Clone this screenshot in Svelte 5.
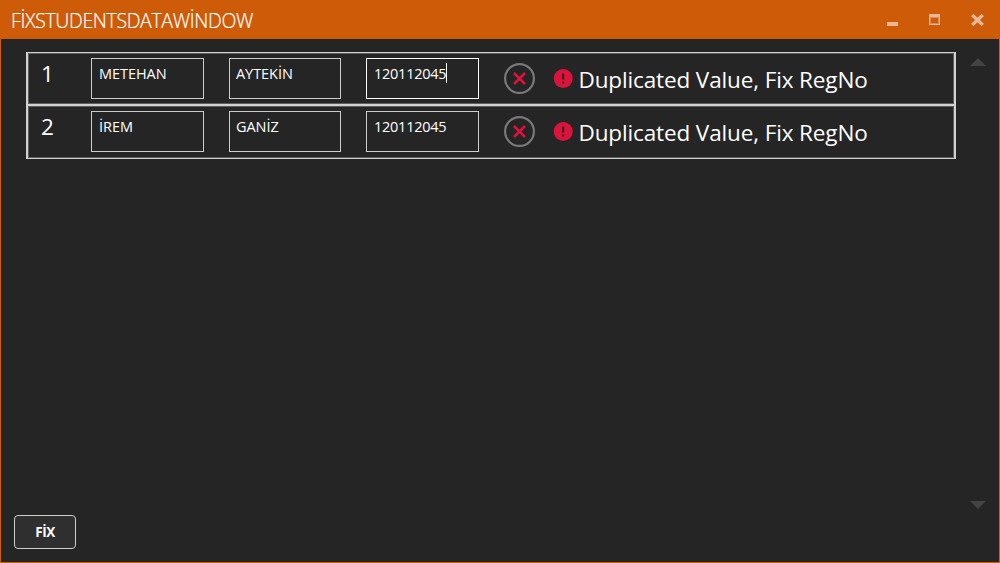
<script>
  const students = [
    { no: 1, name: 'METEHAN', surname: 'AYTEKİN', reg: '120112045', focused: true },
    { no: 2, name: 'İREM', surname: 'GANİZ', reg: '120112045', focused: false }
  ];
</script>

<div class="window">
  <header>
    <h1>FİXSTUDENTSDATAWİNDOW</h1>
    <svg class="controls" width="110" height="38" viewBox="0 0 110 38" shape-rendering="crispEdges">
      <path d="M7 22h11v4H7z" fill="#ebb99a" />
      <path fill="#ebb99a" fill-rule="evenodd" d="M49 14h11v11H49zM51 18v5h7v-5z" />
      <path d="M50.5 17.5h8v6h-8z" fill="none" stroke="#dd8a55" />
      <path d="M92.2 15l10.6 10M102.8 15l-10.6 10" stroke="#ebb99a" stroke-width="3.2" fill="none" shape-rendering="auto" />
    </svg>
  </header>

  <main>
    <div class="list">
      {#each students as s}
        <div class="row">
          <span class="no">{s.no}</span>
          <div class="field name"><span>{s.name}</span></div>
          <div class="field surname"><span>{s.surname}</span></div>
          <div class="field reg" class:focused={s.focused}>
            <span>{s.reg}</span>{#if s.focused}<i class="caret"></i>{/if}
          </div>
          <svg class="remove" width="32" height="32" viewBox="0 0 32 32">
            <circle cx="15.5" cy="15.5" r="14.4" fill="none" stroke="#797979" stroke-width="2.2" />
            <path d="M10 10l11 11M21 10L10 21" stroke="#dc143c" stroke-width="2.5" fill="none" />
          </svg>
          <svg class="alert" width="20" height="20" viewBox="0 0 20 20">
            <circle cx="10.2" cy="9.5" r="9.5" fill="#dc143c" />
            <path d="M9.2 4.6h2v6h-2zM9.2 12.4h2v2h-2z" fill="#252525" />
          </svg>
          <span class="message">Duplicated Value, Fix RegNo</span>
        </div>
      {/each}
    </div>
    <div class="scroll">
      <svg width="16" height="8" viewBox="0 0 16 8"><path d="M0 8L8 0l8 8z" fill="#434343" /></svg>
      <svg width="16" height="8" viewBox="0 0 16 8"><path d="M0 0h16L8 8z" fill="#434343" /></svg>
    </div>
  </main>

  <footer><button>FİX</button></footer>
</div>

<style>
  :global(body) { margin: 0; background: #252525; }
  .window {
    box-sizing: border-box;
    width: 1000px;
    height: 563px;
    display: flex;
    flex-direction: column;
    border: 1px solid #ce5b08;
    background: #252525;
    color: #fff;
    font-family: "Open Sans", "Noto Sans", sans-serif;
  }
  header {
    height: 38px;
    flex: none;
    display: flex;
    justify-content: space-between;
    padding-left: 10px;
    background: #ce5b08;
  }
  h1 {
    margin: 0;
    font-size: 19.5px;
    font-weight: 300;
    line-height: 40px;
    letter-spacing: -0.35px;
    white-space: nowrap;
    -webkit-text-stroke: 0.2px #fff;
  }
  .controls { margin: -1px 9px 0 0; }
  main {
    flex: 1;
    display: flex;
    align-items: flex-start;
    padding: 13px 13px 0 25px;
  }
  .list { width: 930px; flex: none; }
  .row {
    box-sizing: border-box;
    height: 53px;
    display: flex;
    align-items: flex-start;
    border: solid #d2d2d2;
    border-width: 1px 2px;
    box-shadow: inset 0 0 0 1px #5e5e5e;
  }
  .row + .row { height: 54px; }
  .no {
    width: 50px;
    padding-left: 13px;
    margin-top: 6px;
    font-size: 22.5px;
    line-height: 30px;
  }
  .field {
    box-sizing: border-box;
    width: 113px;
    height: 41px;
    margin-top: 5px;
    padding: 6px 0 0 7px;
    display: flex;
    align-items: flex-start;
    border: 1px solid #ccc;
    font-size: 14.5px;
    line-height: 18px;
    letter-spacing: -0.05px;
    white-space: nowrap;
  }
  .surname { width: 112px; margin-left: 25px; padding-left: 6px; }
  .reg { margin-left: 25px; letter-spacing: -0.25px; }
  .focused { border-color: #fff; }
  .caret { width: 1px; height: 20px; margin-top: -2px; background: #fff; }
  .remove { margin: 10px 0 0 25px; }
  .alert { margin: 16px 0 0 17px; }
  .message {
    margin: 12px 0 0 5.5px;
    font-size: 22.5px;
    line-height: 30px;
    letter-spacing: -0.13px;
    white-space: nowrap;
  }
  .scroll {
    height: 451px;
    margin: 6px 0 0 14px;
    display: flex;
    flex-direction: column;
    justify-content: space-between;
  }
  footer { height: 47px; flex: none; padding-left: 13px; }
  button {
    box-sizing: border-box;
    width: 62px;
    height: 34px;
    display: block;
    padding: 0;
    border: 1px solid #ccc;
    border-radius: 4px;
    background: #2f2f2f;
    color: #fff;
    font: 700 13.5px/31px "Open Sans", "Noto Sans", sans-serif;
    letter-spacing: -0.5px;
  }
</style>
